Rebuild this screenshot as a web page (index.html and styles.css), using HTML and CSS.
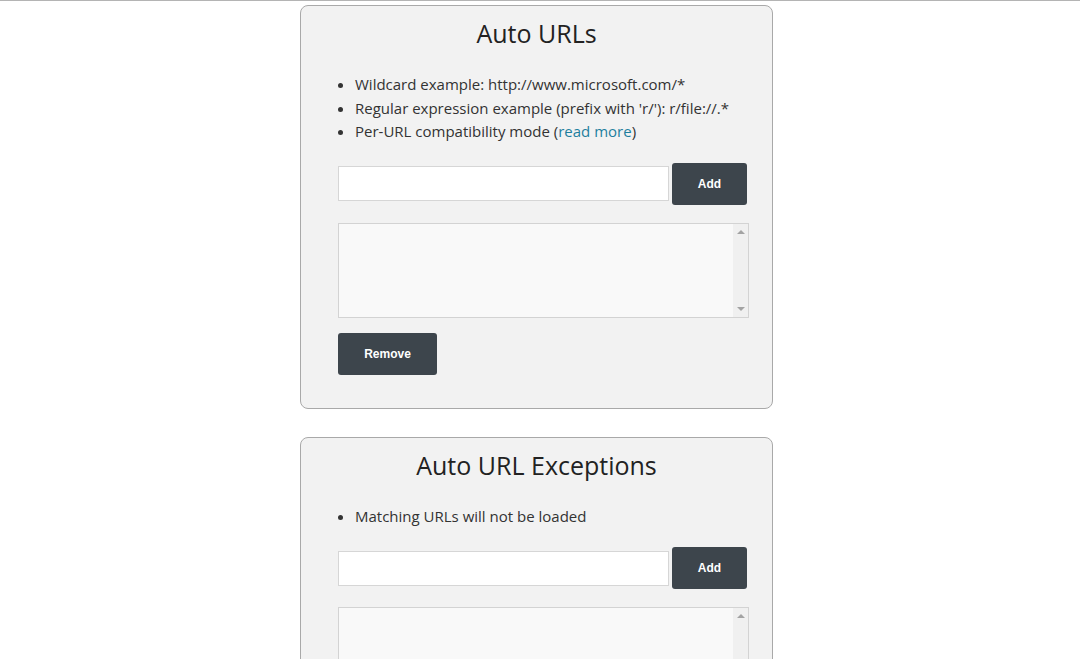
FILE: index.html
```html
<!DOCTYPE html>
<html>
<head>
<meta charset="utf-8">
<link rel="stylesheet" href="styles.css">
</head>
<body>
<div class="topline"></div>
<main class="page">
  <section class="card">
    <h2 class="card-title">Auto URLs</h2>
    <ul class="notes">
      <li>Wildcard example: http://www.microsoft.com/*</li>
      <li>Regular expression example (prefix with 'r/'): r/file://.*</li>
      <li>Per-URL compatibility mode (<a class="link" href="#">read more</a>)</li>
    </ul>
    <div class="add-row">
      <input class="url-input" type="text">
      <button class="btn btn-add">Add</button>
    </div>
    <div class="listbox">
      <div class="listbox-body"></div>
      <div class="scrollbar"><span class="arrow-up"></span><span class="arrow-down"></span></div>
    </div>
    <button class="btn btn-remove">Remove</button>
  </section>

  <section class="card">
    <h2 class="card-title">Auto URL Exceptions</h2>
    <ul class="notes">
      <li>Matching URLs will not be loaded</li>
    </ul>
    <div class="add-row">
      <input class="url-input" type="text">
      <button class="btn btn-add">Add</button>
    </div>
    <div class="listbox">
      <div class="listbox-body"></div>
      <div class="scrollbar"><span class="arrow-up"></span><span class="arrow-down"></span></div>
    </div>
    <button class="btn btn-remove">Remove</button>
  </section>
</main>
</body>
</html>
```

FILE: styles.css
```css
html, body {
  margin: 0;
  padding: 0;
  background: #ffffff;
  overflow: hidden;
}
body {
  font-family: "Open Sans", "Noto Sans", sans-serif;
  color: #333333;
}
.topline {
  height: 1px;
  background: #b4b4b4;
}
.page {
  display: flex;
  flex-direction: column;
  align-items: flex-start;
  padding-left: 300px;
  padding-top: 4px;
  gap: 28px;
}
.card {
  box-sizing: border-box;
  width: 473px;
  background: #f2f2f2;
  border: 1px solid #a9a9a9;
  border-radius: 8px;
  padding: 11px 24px 33px 37px;
  display: flex;
  flex-direction: column;
  align-items: flex-start;
}
.card-title {
  align-self: stretch;
  margin: 0 0 0 -13px;
  font-size: 25px;
  line-height: 32px;
  font-weight: 400;
  text-align: center;
  color: #222222;
}
.notes {
  margin: 24px 0 0 0;
  padding-left: 17px;
  font-size: 15px;
  line-height: 23.5px;
}
.link {
  color: #1e7f9e;
  text-decoration: none;
}
.add-row {
  display: flex;
  align-items: center;
  gap: 3px;
  margin-top: 19px;
}
.url-input {
  box-sizing: border-box;
  width: 331px;
  height: 35px;
  margin: 0;
  border: 1px solid #d6d6d6;
  background: #ffffff;
  padding: 0 8px;
}
.btn {
  box-sizing: border-box;
  border: none;
  border-radius: 3px;
  background: #3d454c;
  color: #ffffff;
  font-family: "Liberation Sans", Arial, sans-serif;
  font-weight: 700;
  font-size: 12px;
  padding: 0;
  margin: 0;
}
.btn-add {
  width: 75px;
  height: 42px;
}
.listbox {
  box-sizing: border-box;
  width: 411px;
  height: 95px;
  margin-top: 18px;
  border: 1px solid #d3d3d3;
  background: #f9f9f9;
  display: flex;
}
.listbox-body {
  flex: 1;
}
.scrollbar {
  width: 15px;
  background: #f0f0f0;
  display: flex;
  flex-direction: column;
  justify-content: space-between;
  align-items: center;
  padding: 6px 0 6px;
  box-sizing: border-box;
}
.arrow-up {
  width: 0;
  height: 0;
  border-left: 4px solid transparent;
  border-right: 4px solid transparent;
  border-bottom: 4px solid #a3a3a3;
}
.arrow-down {
  width: 0;
  height: 0;
  border-left: 4px solid transparent;
  border-right: 4px solid transparent;
  border-top: 4px solid #a3a3a3;
}
.btn-remove {
  width: 99px;
  height: 42px;
  margin-top: 15px;
}
```
